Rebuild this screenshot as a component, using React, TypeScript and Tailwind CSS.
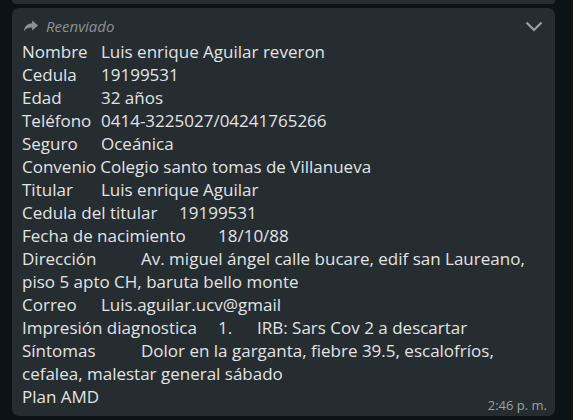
const Row = ({ label, w, children }: { label: string; w?: string; children: React.ReactNode }) => (
  <div>
    <span className={`inline-block ${w ?? ''}`}>{label}</span>
    {children}
  </div>
);

const App = () => {
  return (
    <div className="relative w-[573px] h-[420px] overflow-hidden bg-[#0c1317] font-['Open_Sans',sans-serif]">
      {/* previous bubble edge */}
      <div className="h-[4px] ml-[12px] mr-[18px] rounded-b-[7px] bg-[#262d31]" />
      <div className="relative mt-[4px] ml-[12px] w-[543px] rounded-[7px] bg-[#262d31] pl-[10px] pr-[8px] pt-[8px] pb-[8px] text-[#e1e3e4] shadow-[0_1px_0.5px_rgba(0,0,0,0.13)]">
        <div className="flex items-center justify-between h-[20px] text-[#8a9296]">
          <div className="flex items-center gap-[7px] pl-[1px]">
            <svg width="16" height="12" viewBox="0 0 15 12" fill="currentColor">
              <path d="M8.6 0.6 L14.6 5.6 L8.6 10.6 L8.6 7.6 C4.5 7.4 2 8.7 0.3 11.4 C0.9 6.8 3.3 3.8 8.6 3.3 Z" />
            </svg>
            <span className="italic text-[15px] leading-[20px]">Reenviado</span>
          </div>
          <svg width="18" height="11" viewBox="0 0 18 11" fill="none" stroke="#9aa0a3" strokeWidth="2.2" className="mr-[4px]">
            <polyline points="1.5,1.5 9,9 16.5,1.5" />
          </svg>
        </div>
        <div className="text-[17px] leading-[23px] mt-[4px]">
          <Row label="Nombre" w="min-w-[79px]">Luis enrique Aguilar reveron</Row>
          <Row label="Cedula" w="min-w-[79px]">19199531</Row>
          <Row label="Edad" w="min-w-[79px]">32 años</Row>
          <Row label="Teléfono" w="min-w-[79px]">0414-3225027/04241765266</Row>
          <Row label="Seguro" w="min-w-[79px]">Oceánica</Row>
          <Row label="Convenio" w="pr-[4px]">Colegio santo tomas de Villanueva</Row>
          <Row label="Titular" w="min-w-[79px]">Luis enrique Aguilar</Row>
          <Row label="Cedula del titular" w="min-w-[157px]">19199531</Row>
          <Row label="Fecha de nacimiento" w="min-w-[196px]">18/10/88</Row>
          <Row label="Dirección" w="min-w-[119px]">Av. miguel ángel calle bucare, edif san Laureano, piso 5 apto CH, baruta bello monte</Row>
          <Row label="Correo" w="min-w-[79px]">Luis.aguilar.ucv@gmail</Row>
          <Row label="Impresión diagnostica" w="min-w-[196px]">
            <span className="inline-block min-w-[39px]">1.</span>IRB: Sars Cov 2 a descartar
          </Row>
          <Row label="Síntomas" w="min-w-[119px]">Dolor en la garganta, fiebre 39.5, escalofríos, cefalea, malestar general sábado</Row>
          <div className="flex items-end justify-between">
            <span>Plan AMD</span>
            <span className="text-[13px] leading-[15px] text-[#9aa0a3] mb-[-5px]">2:46 p. m.</span>
          </div>
        </div>
      </div>
    </div>
  );
};

export default App;
